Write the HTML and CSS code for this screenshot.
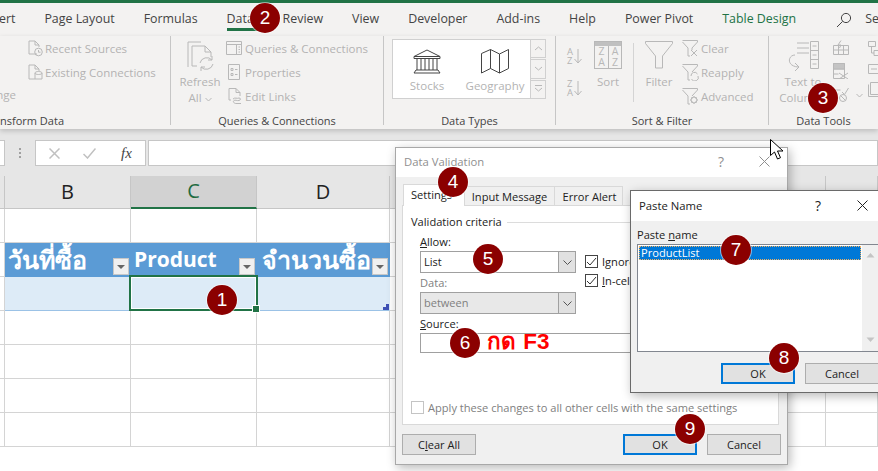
FILE: index.html
```html
<!DOCTYPE html>
<html lang="en">
<head>
  <meta charset="UTF-8" />
  <title>Data Validation - Paste Name</title>
  <link rel="stylesheet" href="styles.css">
</head>
<body>
<div class="app">
  <div class="topbar"></div>

  <nav class="tabs">
    <span class="tab tab-first">Insert</span>
    <span class="tab">Page Layout</span>
    <span class="tab">Formulas</span>
    <span class="tab tab-active">Data</span>
    <span class="tab tab-review">Review</span>
    <span class="tab">View</span>
    <span class="tab">Developer</span>
    <span class="tab">Add-ins</span>
    <span class="tab">Help</span>
    <span class="tab">Power Pivot</span>
    <span class="tab tab-context">Table Design</span>
    <svg class="search-icon" width="16" height="16" viewBox="0 0 16 16"><circle cx="10" cy="6" r="4.6"/><path d="M6.6 9.4 1 15"/></svg>
    <span class="tab tab-search">Search</span>
  </nav>

  <div class="ribbon">
    <section class="group group-get">
      <div class="group-body">
        <div class="cut-col"><span class="tool-text">Change</span></div>
        <div class="tool-list">
          <div class="tool"><svg class="ic" width="15" height="17" viewBox="0 0 15 17"><path d="M9 14H1V1h6l4 4v2M7 1v4h4"/><circle cx="10.5" cy="12" r="3.8"/><path d="M10.5 10v2.2h2"/></svg><span class="tool-text">Recent Sources</span></div>
          <div class="tool"><svg class="ic" width="15" height="17" viewBox="0 0 15 17"><path d="M7 15H1V1h6l4 4v2M7 1v4h4"/><path d="M7 9v6h7V9M7 9c0-2 7-2 7 0s-7 2-7 0"/></svg><span class="tool-text">Existing Connections</span></div>
        </div>
      </div>
      <div class="group-label label-cut"><span>Get &amp; Transform Data</span></div>
    </section>

    <section class="group group-queries">
      <div class="group-body">
        <div class="big-tool big-refresh">
          <svg class="ic" width="30" height="30" viewBox="0 0 30 30"><path d="M3 26V1h13M7 25V5h13l6 6v5M20 5v6h6"/><path d="M7 25h5"/><path d="M15 22a7 7 0 0 1 12-3M28 23a7 7 0 0 1-12 3"/><path d="M27 15v4h-4M16 30v-4h4"/></svg>
          <span class="big-text">Refresh</span>
          <span class="big-text">All <svg class="ic" width="7" height="5" viewBox="0 0 7 5"><path d="M.5 1l3 3 3-3"/></svg></span>
        </div>
        <div class="tool-list">
          <div class="tool"><svg class="ic" width="16" height="15" viewBox="0 0 16 15"><path d="M.5.5h15v13H.5zM.5 3.5h15M10.5 3.5v10M12.5 6h1.5M12.5 8.500h1.500M12.500 11h1.500"/></svg><span class="tool-text">Queries &amp; Connections</span></div>
          <div class="tool"><svg class="ic ic-prop" width="12" height="16" viewBox="0 0 12 16"><path d="M.5.5h11v15H.5zM3 4.500h2v2H3zM7 5.500h2.500M3 9.500h2v2H3zM7 10.500h2.500"/></svg><span class="tool-text">Properties</span></div>
          <div class="tool"><svg class="ic ic-links" width="14" height="16" viewBox="0 0 14 16"><path d="M3 12H1V.5h7l4 4V8M8 .5v4h4"/><path d="M5 11c2-2 4 0 6-1 2 0 2 2 0 2.500-2 .5-4-1-5 0-1.500 1 0 3 2 3h5"/></svg><span class="tool-text">Edit Links</span></div>
        </div>
      </div>
      <div class="group-label">Queries &amp; Connections</div>
    </section>

    <section class="group group-types">
      <div class="group-body">
        <div class="gallery">
          <div class="gallery-item">
            <svg class="ic-dark" width="28" height="25" viewBox="0 0 28 25"><path d="M14 1 1 7.500h26zM1 7.500v2h26v-2M4 10v11M8 10v11M12 10v11M16 10v11M20 10v11M24 10v11M3 21h22M3 21l-2 3h26l-2-3"/></svg>
            <span class="gallery-text">Stocks</span>
          </div>
          <div class="gallery-item">
            <svg class="ic-dark" width="28" height="25" viewBox="0 0 28 25"><path d="M.5 4.500 9.500.5l9 4.500 9-4.500v19l-9 4.500-9-4.500-9 4.500zM9.500.5v19M18.500 5v19"/></svg>
            <span class="gallery-text">Geography</span>
          </div>
        </div>
        <div class="spinner">
          <div class="spin"><svg class="ic" width="9" height="5" viewBox="0 0 9 5"><path d="M1 4l3.500-3L8 4"/></svg></div>
          <div class="spin"><svg class="ic" width="9" height="5" viewBox="0 0 9 5"><path d="M1 1l3.500 3L8 1"/></svg></div>
          <div class="spin"><svg class="ic" width="9" height="8" viewBox="0 0 9 8"><path d="M1 .5h7M1 3l3.500 3L8 3"/></svg></div>
        </div>
      </div>
      <div class="group-label">Data Types</div>
    </section>

    <section class="group group-sort">
      <div class="group-body">
        <div class="sort-col">
          <div class="sort-btn"><span class="sort-letters"><span>A</span><span>Z</span></span><svg class="ic" width="8" height="16" viewBox="0 0 8 16"><path d="M4 1v14M.5 11 4 15l3.500-4"/></svg></div>
          <div class="sort-btn"><span class="sort-letters"><span>Z</span><span>A</span></span><svg class="ic" width="8" height="16" viewBox="0 0 8 16"><path d="M4 1v14M.5 11 4 15l3.500-4"/></svg></div>
        </div>
        <div class="big-tool big-sort">
          <div class="sort-box">
            <div class="sort-box-top"></div>
            <div class="sort-box-cols"><span><i>Z</i><i>A</i></span><span><i>A</i><i>Z</i></span></div>
          </div>
          <span class="big-text">Sort</span>
        </div>
        <div class="sort-divider"></div>
        <div class="big-tool big-filter">
          <svg class="ic" width="28" height="28" viewBox="0 0 28 28"><path d="M.5.5h27v2L17.500 15v12h-7V15L.5 2.500z"/></svg>
          <span class="big-text">Filter</span>
        </div>
        <div class="tool-list filter-list">
          <div class="tool"><svg class="ic" width="18" height="17" viewBox="0 0 18 17"><path d="M.5.500h15v1.500L10 8v2M.5 2 6 8v8h2M9 10l6 6M15 10l-6 6"/></svg><span class="tool-text">Clear</span></div>
          <div class="tool"><svg class="ic" width="18" height="17" viewBox="0 0 18 17"><path d="M.5.500h15v1.500L10 8M.5 2 6 8v8h2"/><path d="M9 12a3.500 3.500 0 0 1 6.500-2M16 12a3.500 3.500 0 0 1-6.500 3"/></svg><span class="tool-text">Reapply</span></div>
          <div class="tool"><svg class="ic" width="18" height="17" viewBox="0 0 18 17"><path d="M.5.500h15v1.500L10 8M.5 2 6 8v8h2"/><circle cx="12" cy="12" r="3"/><path d="M12 8v1.500M12 14.500V16M8 12h1.500M14.500 12H16M9.500 9.500l1 1M13.500 13.500l1 1M14.500 9.500l-1 1M10.500 13.500l-1 1"/></svg><span class="tool-text">Advanced</span></div>
        </div>
      </div>
      <div class="group-label">Sort &amp; Filter</div>
    </section>

    <section class="group group-tools">
      <div class="group-body">
        <div class="big-tool big-columns">
          <svg class="ic" width="32" height="30" viewBox="0 0 32 30"><path d="M10 2h12M10 7h12M10 12h12"/><path d="M23.500.5h8v27h-8zM23.500 9.500h8M23.500 18.500h8M25.500 5h4M25.500 14h4M25.500 23h4"/><path d="M8 14c-7 0-9 11 3 12M8 22l4 4-4 4"/></svg>
          <span class="big-text">Text to</span>
          <span class="big-text">Columns</span>
        </div>
        <div class="tools-small">
          <svg class="ic" width="16" height="15" viewBox="0 0 16 15"><path d="M.5 5.500h15v9H.5zM.5 10h15M5.500 5.500v9M10.500 5.500v9M8 .5 5 5h3L6.500 8"/></svg>
          <svg class="ic" width="16" height="16" viewBox="0 0 16 16"><path d="M.5.5h11v15H.5zM.5 6h11M.5 11h5M6 10l9 6M15 10l-9 6"/><path class="ic-fill" d="M.5.5h11V6H.5z"/></svg>
          <svg class="ic" width="16" height="15" viewBox="0 0 16 15"><path d="M.5 3h7M.5 7h5M9 5l2.500 2.500L15.500 1"/><circle cx="10" cy="11" r="3.500"/><path d="M7.500 8.500l5 5"/></svg>
        </div>
        <svg class="ic tools-caret" width="7" height="5" viewBox="0 0 7 5"><path d="M.5 1l3 3 3-3"/></svg>
        <div class="tools-small tools-last">
          <svg class="ic" width="14" height="15" viewBox="0 0 14 15"><path d="M.5.5h7v5h-7zM6 9.500h7v5H6zM3.500 5.500v6.500H6"/></svg>
          <svg class="ic" width="12" height="10" viewBox="0 0 12 10"><path d="M.5.5h11v9H.5zM3 5h6"/></svg>
          <svg class="ic" width="14" height="15" viewBox="0 0 14 15"><path d="M2.500.5h11v12h-11zM.5 2.500v12h10"/></svg>
        </div>
      </div>
      <div class="group-label">Data Tools</div>
    </section>
  </div>

  <div class="formula-bar">
    <div class="name-box"></div>
    <div class="bar-dots"><i></i><i></i><i></i></div>
    <div class="fx-box">
      <svg class="ic" width="11" height="11" viewBox="0 0 11 11"><path d="M.5.5l10 10M10.500.5l-10 10"/></svg>
      <svg class="ic" width="13" height="11" viewBox="0 0 13 11"><path d="M.5 6l4 4L12.500.5"/></svg>
      <span class="fx-text">fx</span>
    </div>
    <div class="formula-input"></div>
  </div>

  <div class="col-heads">
    <div class="col-head col-corner"></div>
    <div class="col-head col-b">B</div>
    <div class="col-head col-c col-selected">C</div>
    <div class="col-head col-d">D</div>
    <div class="col-head col-e"></div>
    <div class="col-head col-f"></div>
    <div class="col-head col-g"></div>
    <div class="col-head col-h"></div>
    <div class="col-head col-i"></div>
  </div>

  <div class="sheet">
    <div class="cell"></div><div class="cell"></div><div class="cell"></div><div class="cell"></div><div class="cell"></div><div class="cell"></div><div class="cell"></div><div class="cell"></div><div class="cell"></div>

    <div class="cell"></div>
    <div class="cell cell-head"><span class="thai">วันที่ซื้อ</span><b class="filter-btn"></b></div>
    <div class="cell cell-head"><span>Product</span><b class="filter-btn"></b></div>
    <div class="cell cell-head cell-head-last"><span class="thai">จำนวนซื้อ</span><b class="filter-btn"></b></div>
    <div class="cell"></div><div class="cell"></div><div class="cell"></div><div class="cell"></div><div class="cell"></div>

    <div class="cell"></div>
    <div class="cell cell-data"></div>
    <div class="cell cell-data cell-selected"><span class="selection"><i class="fill-handle"></i></span></div>
    <div class="cell cell-data"><i class="table-handle"></i></div>
    <div class="cell"></div><div class="cell"></div><div class="cell"></div><div class="cell"></div><div class="cell"></div>

    <div class="cell"></div><div class="cell"></div><div class="cell"></div><div class="cell"></div><div class="cell"></div><div class="cell"></div><div class="cell"></div><div class="cell"></div><div class="cell"></div>
    <div class="cell"></div><div class="cell"></div><div class="cell"></div><div class="cell"></div><div class="cell"></div><div class="cell"></div><div class="cell"></div><div class="cell"></div><div class="cell"></div>
    <div class="cell"></div><div class="cell"></div><div class="cell"></div><div class="cell"></div><div class="cell"></div><div class="cell"></div><div class="cell"></div><div class="cell"></div><div class="cell"></div>
    <div class="cell"></div><div class="cell"></div><div class="cell"></div><div class="cell"></div><div class="cell"></div><div class="cell"></div><div class="cell"></div><div class="cell"></div><div class="cell"></div>
  </div>

  <!-- dialogs sit on top of the sheet -->
  <div class="dialog dialog-validation">
    <div class="dialog-title title-inactive">
      <span class="title-text">Data Validation</span>
      <span class="title-help">?</span>
      <svg class="title-close" width="11" height="11" viewBox="0 0 11 11"><path d="M.5.5l10 10M10.500.5l-10 10"/></svg>
    </div>
    <div class="dialog-body">
      <div class="dv-tabs">
        <span class="dv-tab dv-tab-active">Settings</span>
        <span class="dv-tab">Input Message</span>
        <span class="dv-tab">Error Alert</span>
      </div>
      <div class="dv-panel">
        <div class="legend"><span>Validation criteria</span><i></i></div>
        <div class="criteria">
          <div class="criteria-left">
            <label class="field-label"><u>A</u>llow:</label>
            <div class="combo"><span>List</span><b class="combo-btn"><svg width="9" height="5" viewBox="0 0 9 5"><path d="M.5.5l4 4 4-4"/></svg></b></div>
            <label class="field-label label-muted">Data:</label>
            <div class="combo combo-off"><span>between</span><b class="combo-btn"><svg width="9" height="5" viewBox="0 0 9 5"><path d="M.5.5l4 4 4-4"/></svg></b></div>
          </div>
          <div class="criteria-right">
            <div class="check-row"><b class="check"><svg width="11" height="10" viewBox="0 0 11 10"><path d="M1 5l3 3 6-7"/></svg></b><span>Ignore blank</span></div>
            <div class="check-row"><b class="check"><svg width="11" height="10" viewBox="0 0 11 10"><path d="M1 5l3 3 6-7"/></svg></b><span><u>I</u>n-cell dropdown</span></div>
          </div>
        </div>
        <label class="field-label field-source"><u>S</u>ource:</label>
        <div class="source-input">กด F3</div>
        <div class="apply-row"><b class="check check-off"></b><span>Apply these changes to all other cells with the same settings</span></div>
      </div>
      <div class="dv-buttons">
        <button class="btn" type="button">C<u>l</u>ear All</button>
        <button class="btn btn-default btn-push" type="button">OK</button>
        <button class="btn" type="button">Cancel</button>
      </div>
    </div>
  </div>

  <div class="dialog dialog-paste">
    <div class="dialog-title">
      <span class="title-text">Paste Name</span>
      <span class="title-help">?</span>
      <svg class="title-close" width="11" height="11" viewBox="0 0 11 11"><path d="M.5.5l10 10M10.500.5l-10 10"/></svg>
    </div>
    <div class="dialog-body paste-body">
      <label class="paste-label">Paste <u>n</u>ame</label>
      <div class="listbox">
        <div class="list-items"><div class="list-item">ProductList</div></div>
        <div class="list-scroll">
          <svg width="9" height="6" viewBox="0 0 9 6"><path d="M.5 5.500 4.500 1l4 4.500z"/></svg>
          <svg width="9" height="6" viewBox="0 0 9 6"><path d="M.5.5l4 4.500 4-4.500z"/></svg>
        </div>
      </div>
      <div class="paste-buttons">
        <button class="btn btn-default" type="button">OK</button>
        <button class="btn" type="button">Cancel</button>
      </div>
    </div>
  </div>

  <svg class="cursor" width="14" height="22" viewBox="0 0 14 22"><path d="M.5.5v16l4-3.500 3 7 3-1.300-3-6.700h5.500z"/></svg>

  <span class="badge badge-1">1</span>
  <span class="badge badge-2">2</span>
  <span class="badge badge-3">3</span>
  <span class="badge badge-4">4</span>
  <span class="badge badge-5">5</span>
  <span class="badge badge-6">6</span>
  <span class="badge badge-7">7</span>
  <span class="badge badge-8">8</span>
  <span class="badge badge-9">9</span>
</div>
</body>
</html>
```

FILE: styles.css
```css
* {
  box-sizing: border-box;
}

body {
  margin: 0;
  font-family: 'Open Sans', 'Noto Sans', sans-serif;
  background: #e6e6e6;
}

.app {
  position: relative;
  width: 878px;
  height: 471px;
  overflow: hidden;
  background: #fff;
}

.topbar {
  height: 3px;
  background: #217346;
}

/* ribbon tabs */
.tabs {
  display: flex;
  align-items: flex-start;
  gap: 29px;
  height: 33px;
  padding-top: 6px;
  background: #f3f2f1;
  white-space: nowrap;
}

.tab {
  font-size: 12.4px;
  line-height: 19px;
  color: #444;
  flex: none;
}

.tab-first {
  margin-left: -18px;
}

.tab-active {
  width: 31px;
  height: 22px;
  border-bottom: 3px solid #217346;
  margin-right: -4px;
}

.tab-context {
  color: #217346;
}

.search-icon {
  flex: none;
  margin: 3px 0 0 11px;
  fill: none;
  stroke: #444;
}

.tab-search {
  margin-left: -16px;
}

/* ribbon body */
.ribbon {
  display: flex;
  height: 93px;
  background: #f3f2f1;
  box-shadow: 0 2px 5px rgba(0, 0, 0, 0.18);
  position: relative;
}

.group {
  display: flex;
  flex-direction: column;
  flex: none;
  height: 89px;
  border-right: 1px solid #c6c6c6;
}

.group-get { width: 171px; }
.group-queries { width: 213px; }
.group-types { width: 172px; }
.group-sort { width: 213px; }
.group-tools { width: 109px; border-right: 0; }

.group-body {
  flex: 1;
  display: flex;
  min-height: 0;
}

.group-label {
  height: 14px;
  margin-bottom: -3px;
  font-size: 11px;
  line-height: 14px;
  text-align: center;
  color: #444;
  white-space: nowrap;
}

.label-cut {
  display: flex;
  justify-content: flex-end;
  width: 64px;
}

.ic {
  fill: none;
  stroke: #b8b8b8;
  flex: none;
}

.ic-fill {
  fill: #c4c4c4;
}

.ic-dark {
  fill: none;
  stroke: #444;
  flex: none;
}

.tool-list {
  display: flex;
  flex-direction: column;
}

.tool {
  display: flex;
  align-items: center;
  height: 24px;
  white-space: nowrap;
}

.tool-text,
.big-text,
.gallery-text {
  font-size: 11.5px;
  color: #b3b3b3;
}

.tool .ic {
  margin-right: 3px;
}

.group-get .tool .ic {
  margin-right: 2px;
}

.cut-col {
  display: flex;
  justify-content: flex-end;
  width: 16px;
  padding-top: 51px;
  margin-right: 12px;
  white-space: nowrap;
}

.big-tool {
  display: flex;
  flex-direction: column;
  align-items: center;
  padding-top: 5px;
  white-space: nowrap;
}

.big-text {
  line-height: 16px;
}

.big-tool > .ic + .big-text {
  margin-top: 3px;
}

.big-sort .big-text,
.big-filter .big-text {
  margin-top: 5px !important;
}

.big-refresh {
  width: 50px;
  margin: 0 1px 0 4px;
}

.ic-prop {
  margin-left: 2px;
  margin-right: 5px !important;
}

.ic-links {
  margin-left: 2px;
  margin-right: 3px !important;
}

/* data types gallery */
.gallery {
  display: flex;
  width: 139px;
  height: 60px;
  margin: 3px 0 0 8px;
  padding-top: 9px;
  background: #fff;
  border: 1px solid #d0d0d0;
}

.gallery-item {
  display: flex;
  flex-direction: column;
  align-items: center;
  gap: 4px;
  width: 68px;
}

.spinner {
  display: flex;
  flex-direction: column;
  gap: 1px;
  width: 15px;
  margin-top: 3px;
}

.spin {
  display: flex;
  align-items: center;
  justify-content: center;
  height: 19.3px;
  border: 1px solid #d0d0d0;
  border-left: 0;
}

/* sort and filter */
.sort-col {
  display: flex;
  flex-direction: column;
  gap: 14px;
  width: 18px;
  margin: 11px 0 0 11px;
}

.sort-btn {
  display: flex;
  align-items: center;
  gap: 1px;
  height: 18px;
}

.sort-letters {
  display: flex;
  flex-direction: column;
  font-size: 9.500px;
  line-height: 9px;
  color: #b3b3b3;
}

.big-sort {
  width: 30px;
  margin-left: 8px;
}

.sort-box {
  width: 28px;
  height: 28px;
  border: 1px solid #b8b8b8;
}

.sort-box-top {
  height: 4px;
  background: #c0c0c0;
}

.sort-box-cols {
  display: flex;
  height: 22px;
}

.sort-box-cols span {
  display: flex;
  flex-direction: column;
  align-items: center;
  width: 13px;
  font-size: 10.500px;
  line-height: 11px;
  color: #b8b8b8;
}

.sort-box-cols span + span {
  border-left: 1px solid #b8b8b8;
}

.sort-box-cols i {
  font-style: normal;
}

.sort-divider {
  width: 1px;
  height: 59px;
  margin: 7px 0 0 10px;
  background: #d4d4d4;
}

.big-filter {
  width: 30px;
  margin-left: 10px;
}

.filter-list {
  margin-left: 8px;
}

.filter-list .ic {
  margin-right: 1px;
}

/* data tools */
.big-columns {
  width: 44px;
  margin-left: 12px;
}

.tools-small {
  display: flex;
  flex-direction: column;
  gap: 8px;
  width: 16px;
  margin: 4px 0 0 8px;
}

.tools-caret {
  margin: 57px 0 0 7px;
}

.tools-last {
  margin: 5px 0 0 5px;
}

/* formula bar */
.formula-bar {
  display: flex;
  height: 47px;
  padding-top: 11px;
  background: #e6e6e6;
}

.name-box,
.fx-box,
.formula-input {
  height: 26px;
  background: #fff;
  border: 1px solid #c6c6c6;
}

.name-box {
  width: 5px;
  border-left: 0;
}

.bar-dots {
  display: flex;
  flex-direction: column;
  justify-content: center;
  gap: 2px;
  width: 30px;
  height: 26px;
  padding-left: 14px;
}

.bar-dots i {
  width: 2px;
  height: 2px;
  background: #a0a0a0;
}

.fx-box {
  display: flex;
  align-items: center;
  width: 111px;
  padding-left: 13px;
  gap: 23px;
}

.fx-box .ic {
  stroke: #c0c0c0;
  stroke-width: 1.500;
}

.fx-text {
  margin-left: 2px;
  font-family: 'Liberation Serif', serif;
  font-style: italic;
  font-size: 15px;
  color: #444;
}

.formula-input {
  flex: 1;
  margin-left: 2px;
}

/* sheet */
.col-heads,
.sheet {
  display: grid;
  grid-template-columns: 5px 126px 126px 133px 109px 110px 109px 108px 52px;
}

.col-heads {
  height: 33px;
}

.col-head {
  display: flex;
  align-items: center;
  justify-content: center;
  font-size: 20px;
  padding-bottom: 2px;
  color: #222;
  background: #e6e6e6;
  border-right: 1px solid #c6c6c6;
  border-bottom: 1px solid #c6c6c6;
}

.col-selected {
  color: #1f6b41;
  background: #d2d2d2;
  border-bottom: 2px solid #217346;
}

.sheet {
  grid-auto-rows: 34px;
}

.cell {
  position: relative;
  display: flex;
  border-right: 1px solid #d4d4d4;
  border-bottom: 1px solid #d4d4d4;
}

.cell-head {
  align-items: flex-end;
  justify-content: space-between;
  padding: 0 1px 1px 3px;
  background: #5b9bd5;
  border-right-color: #5b9bd5;
  border-bottom-color: #5b9bd5;
  overflow: hidden;
  color: #fff;
  font-size: 21px;
  font-weight: 700;
  line-height: 32px;
  white-space: nowrap;
}

.thai {
  font-size: 25px;
}

.cell-head-last {
  padding-left: 5px;
}

.filter-btn {
  position: relative;
  flex: none;
  width: 16px;
  height: 17px;
  background: #f0f0f0;
  border: 1px solid #c8c8c8;
}

.filter-btn::after {
  content: "";
  position: absolute;
  left: 3px;
  top: 6px;
  border-left: 4px solid transparent;
  border-right: 4px solid transparent;
  border-top: 4px solid #666;
}

.cell-data {
  background: #ddebf7;
  border-right-color: #ddebf7;
  border-bottom-color: #9bc2e6;
}

.cell-selected {
  z-index: 1;
}

.selection {
  position: absolute;
  left: -2px;
  top: -2px;
  width: 129px;
  height: 36px;
  border: 2px solid #217346;
  box-shadow: inset 0 0 0 1px #fff;
}

.fill-handle {
  position: absolute;
  right: -3px;
  bottom: -3px;
  width: 6px;
  height: 6px;
  background: #217346;
  outline: 1px solid #fff;
}

.table-handle {
  position: absolute;
  right: 0;
  bottom: 0;
  width: 6px;
  height: 6px;
  background: #3f51b5;
  clip-path: polygon(100% 0, 100% 100%, 0 100%, 0 50%, 50% 50%, 50% 0);
}

/* dialogs */
.dialog {
  position: absolute;
  z-index: 2;
  display: flex;
  flex-direction: column;
  background: #f0f0f0;
  box-shadow: 2px 3px 10px rgba(0, 0, 0, 0.28);
}

.dialog-validation {
  left: 395px;
  top: 147px;
  width: 393px;
  height: 318px;
  border: 1px solid #a8a8a8;
}

.dialog-paste {
  left: 630px;
  top: 190px;
  width: 262px;
  height: 203px;
  border: 1px solid #6a6a6a;
}

.dialog-title {
  display: flex;
  align-items: center;
  height: 29px;
  flex: none;
  padding: 0 0 2px 8px;
  background: #fff;
  font-size: 11.300px;
  color: #222;
}

.dialog-paste .dialog-title {
  height: 30px;
}

.title-inactive {
  color: #8f8f8f;
}

.title-help {
  margin-left: auto;
  font-size: 14px;
}

.dialog-validation .title-help {
  margin-right: 35px;
}

.dialog-paste .title-help {
  margin-right: 36px;
}

.title-close {
  fill: none;
  stroke: #222;
  flex: none;
}

.dialog-validation .title-close {
  margin-right: 17px;
  stroke: #8f8f8f;
}

.dialog-paste .title-close {
  margin-right: 23px;
}

.dialog-body {
  flex: 1;
  font-size: 11.100px;
  color: #222;
}

.dv-tabs {
  display: flex;
  align-items: flex-end;
  height: 21px;
  margin: 7px 0 0 7px;
}

.dv-tab {
  display: flex;
  align-items: center;
  justify-content: center;
  height: 19px;
  padding: 0 7px;
  background: #f0f0f0;
  border: 1px solid #d9d9d9;
  border-bottom: 0;
  margin-left: -1px;
  white-space: nowrap;
}

.dv-tab-active {
  position: relative;
  justify-content: flex-start;
  width: 62px;
  height: 22px;
  margin: 0 0 -1px 0;
  background: #fff;
  padding-bottom: 3px;
}

.dv-tab:nth-child(2) { width: 91px; }
.dv-tab:nth-child(3) { width: 69px; padding-left: 9px; }

.dv-panel {
  display: flex;
  flex-direction: column;
  width: 377px;
  height: 220px;
  margin-left: 6px;
  padding: 9px 0 9px 8px;
  background: #fff;
  border: 1px solid #d9d9d9;
}

.legend {
  display: flex;
  align-items: center;
  gap: 5px;
  height: 14px;
  line-height: 14px;
}

.legend i {
  flex: 1;
  height: 1px;
  background: #dcdcdc;
}

.criteria {
  display: flex;
  margin: 6px 0 0 9px;
}

.criteria-left {
  width: 156px;
}

.field-label {
  display: block;
  height: 14px;
  line-height: 14px;
  margin-bottom: 2px;
}

.label-muted {
  margin-top: 3px;
  color: #808080;
}

.combo {
  display: flex;
  align-items: center;
  justify-content: space-between;
  height: 22px;
  padding-left: 3px;
  background: #fff;
  border: 1px solid #a0a0a0;
  font-size: 11px;
}

.combo span {
  padding-bottom: 2px;
}

.combo-off {
  background: #e8e8e8;
  color: #808080;
}

.combo-btn {
  display: flex;
  align-items: center;
  justify-content: center;
  width: 17px;
  height: 20px;
  background: #e1e1e1;
  border-left: 1px solid #a0a0a0;
}

.combo-btn svg {
  fill: none;
  stroke: #555;
}

.criteria-right {
  margin: 17px 0 0 9px;
  white-space: nowrap;
}

.check-row {
  display: flex;
  align-items: center;
  gap: 4px;
  height: 19px;
}

.check {
  display: flex;
  align-items: center;
  justify-content: center;
  width: 13px;
  height: 13px;
  background: #fff;
  border: 1px solid #444;
}

.check svg {
  fill: none;
  stroke: #333;
}

.check-off {
  border-color: #c4c4c4;
}

.field-source {
  margin: 3px 0 2px 9px;
}

.source-input {
  width: 350px;
  height: 20px;
  margin-left: 9px;
  padding-left: 66px;
  border: 1px solid #a0a0a0;
  font-family: 'Liberation Sans', sans-serif;
  font-size: 22.500px;
  font-weight: 700;
  line-height: 16px;
  word-spacing: 1px;
  color: #ff0000;
}

.apply-row {
  display: flex;
  align-items: center;
  gap: 4px;
  margin-top: auto;
  color: #808080;
  white-space: nowrap;
}

.dv-buttons {
  display: flex;
  gap: 10px;
  margin: 9px 6px 0;
}

.btn {
  width: 74px;
  height: 21px;
  padding: 0;
  background: #e1e1e1;
  border: 1px solid #adadad;
  font-family: inherit;
  font-size: 11px;
  color: #222;
}

.btn-default {
  border: 2px solid #0078d7;
}

.btn-push {
  margin-left: auto;
}

.paste-body {
  padding: 7px 0 0 6px;
}

.paste-label {
  display: block;
  height: 14px;
  line-height: 14px;
}

.listbox {
  display: flex;
  width: 242px;
  height: 108px;
  margin-top: 2px;
  background: #fff;
  border: 1px solid #828790;
}

.list-items {
  width: 224px;
  padding: 1px;
}

.list-item {
  height: 14px;
  line-height: 13px;
  padding-left: 2px;
  background: #0078d7;
  outline: 1px dotted #f0b060;
  outline-offset: -1px;
  color: #fff;
}

.list-scroll {
  display: flex;
  flex-direction: column;
  align-items: center;
  justify-content: space-between;
  width: 16px;
  padding: 7px 0 8px;
  background: #f0f0f0;
}

.list-scroll svg {
  fill: #c4c4c4;
}

.paste-buttons {
  display: flex;
  gap: 10px;
  margin: 11px 0 0 84px;
}

.cursor {
  position: absolute;
  z-index: 3;
  left: 770px;
  top: 139px;
  fill: #fff;
  stroke: #000;
}

/* numbered callouts */
.badge {
  position: absolute;
  z-index: 3;
  display: flex;
  align-items: center;
  justify-content: center;
  width: 30px;
  height: 30px;
  margin: -15px 0 0 -15px;
  border-radius: 50%;
  background: #8b0000;
  box-shadow: 0 0 0 1px rgba(255, 255, 255, 0.5);
  font-family: 'Liberation Sans', sans-serif;
  font-size: 19px;
  color: #fff;
}

.badge-1 { left: 222px; top: 300px; }
.badge-2 { left: 265px; top: 18px; }
.badge-3 { left: 823px; top: 98px; }
.badge-4 { left: 453px; top: 182px; }
.badge-5 { left: 488px; top: 259px; }
.badge-6 { left: 465px; top: 343px; }
.badge-7 { left: 736px; top: 250px; }
.badge-8 { left: 784px; top: 358px; }
.badge-9 { left: 690px; top: 429px; }
```
